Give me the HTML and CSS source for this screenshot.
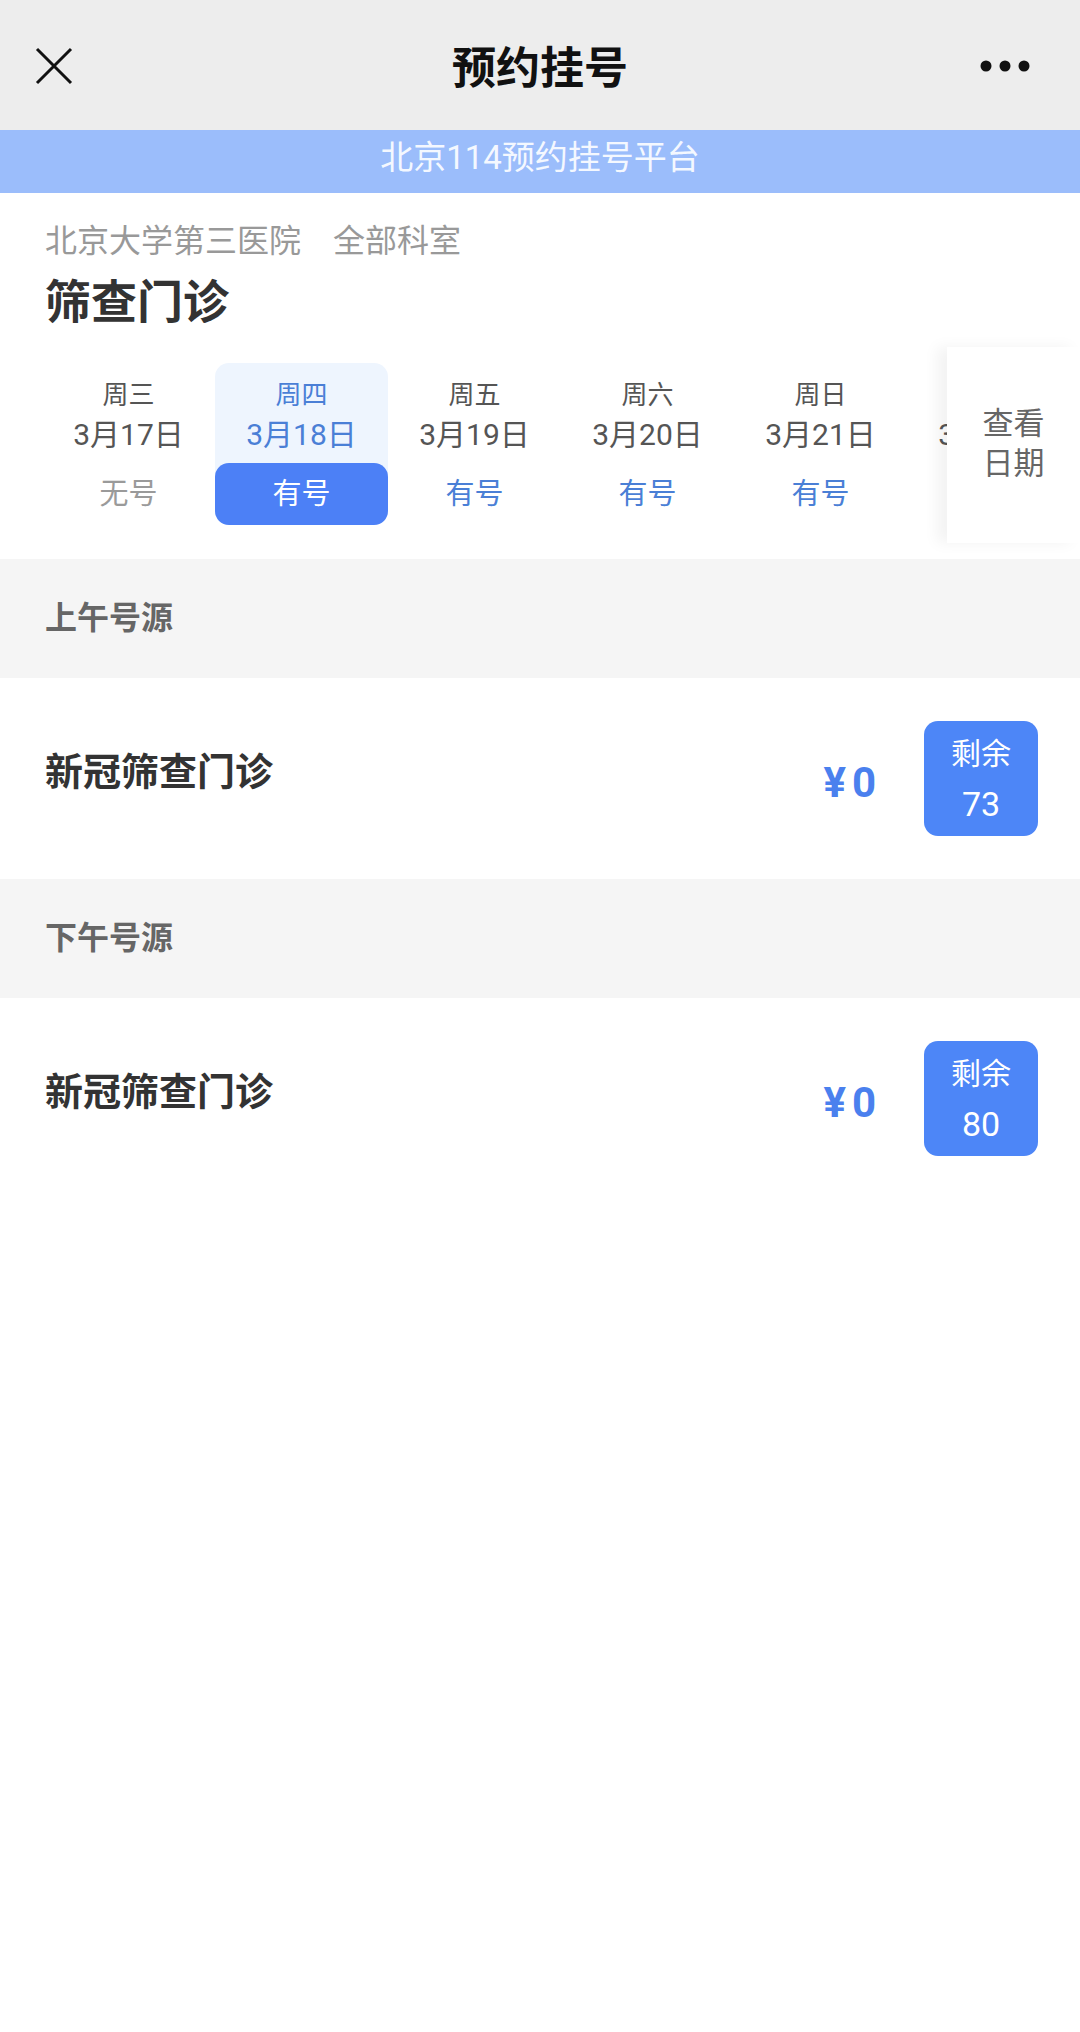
FILE: index.html
```html
<!DOCTYPE html>
<html lang="zh-CN">
<head>
  <meta charset="UTF-8" />
  <meta name="viewport" content="width=device-width, initial-scale=1.0" />
  <title>预约挂号</title>
  <link rel="stylesheet" href="styles.css">
</head>
<body>
  <header class="topbar">
    <div class="topbar-side">
      <svg class="icon-close" width="38" height="38" viewBox="0 0 38 38">
        <path d="M2 2 L36 36 M36 2 L2 36" stroke="#111" stroke-width="3" fill="none" />
      </svg>
    </div>
    <h1 class="topbar-title">预约挂号</h1>
    <div class="topbar-side right">
      <svg width="50" height="12" viewBox="0 0 50 12">
        <circle cx="6" cy="6" r="5.5" fill="#111" />
        <circle cx="25" cy="6" r="5.5" fill="#111" />
        <circle cx="44" cy="6" r="5.5" fill="#111" />
      </svg>
    </div>
  </header>

  <div class="platform-bar">北京114预约挂号平台</div>

  <section class="dept-info">
    <p class="dept-path">北京大学第三医院　全部科室</p>
    <h2 class="dept-name">筛查门诊</h2>
  </section>

  <div class="date-strip">
    <div class="date-list">
      <div class="date-cell">
        <span class="week">周三</span>
        <span class="day">3月17日</span>
        <span class="status none">无号</span>
      </div>
      <div class="date-cell active">
        <span class="week">周四</span>
        <span class="day">3月18日</span>
        <span class="status">有号</span>
      </div>
      <div class="date-cell">
        <span class="week">周五</span>
        <span class="day">3月19日</span>
        <span class="status">有号</span>
      </div>
      <div class="date-cell">
        <span class="week">周六</span>
        <span class="day">3月20日</span>
        <span class="status">有号</span>
      </div>
      <div class="date-cell">
        <span class="week">周日</span>
        <span class="day">3月21日</span>
        <span class="status">有号</span>
      </div>
      <div class="date-cell">
        <span class="week">周一</span>
        <span class="day">3月22日</span>
        <span class="status">有号</span>
      </div>
    </div>
    <div class="date-more">查看<br>日期</div>
  </div>

  <div class="section-title">上午号源</div>
  <div class="slot-row">
    <span class="slot-name">新冠筛查门诊</span>
    <span class="slot-price">¥0</span>
    <div class="slot-left">
      <span>剩余</span>
      <span class="num">73</span>
    </div>
  </div>

  <div class="section-title">下午号源</div>
  <div class="slot-row">
    <span class="slot-name">新冠筛查门诊</span>
    <span class="slot-price">¥0</span>
    <div class="slot-left">
      <span>剩余</span>
      <span class="num">80</span>
    </div>
  </div>
</body>
</html>
```

FILE: styles.css
```css
* {
  box-sizing: border-box;
  margin: 0;
  padding: 0;
}

body {
  font-family: 'Roboto', 'Noto Sans CJK SC', sans-serif;
  background: #ffffff;
  color: #333333;
  width: 1080px;
  min-height: 2032px;
}

.topbar {
  height: 130px;
  background: #ededed;
  display: flex;
  align-items: center;
}

.topbar-side {
  width: 110px;
  display: flex;
  align-items: center;
  padding-left: 35px;
  padding-top: 2px;
}

.topbar-side.right {
  justify-content: flex-end;
  padding-left: 0;
  padding-right: 50px;
}

.topbar-title {
  flex: 1;
  text-align: center;
  font-size: 44px;
  font-weight: 700;
  color: #111111;
  line-height: 1;
  padding-top: 8px;
}

.platform-bar {
  height: 63px;
  background: #9bbdfb;
  color: #f4f8ff;
  font-size: 33px;
  line-height: 56px;
  text-align: center;
}

.dept-info {
  padding: 26px 45px 0;
}

.dept-path {
  font-size: 32px;
  line-height: 44px;
  color: #999999;
}

.dept-name {
  margin-top: 11px;
  font-size: 46px;
  line-height: 56px;
  font-weight: 700;
  color: #333333;
}

.date-strip {
  position: relative;
  margin-top: 17px;
  height: 212px;
  padding: 16px 0 0 42px;
}

.date-list {
  display: flex;
  width: 905px;
  overflow: hidden;
}

.date-cell {
  flex: 0 0 173px;
  height: 162px;
  display: flex;
  flex-direction: column;
  align-items: center;
  padding-top: 14px;
  border-radius: 14px;
  color: #555555;
}

.date-cell .week {
  font-size: 26px;
  line-height: 36px;
}

.date-cell .day {
  font-size: 30px;
  line-height: 44px;
}

.date-cell .status {
  margin-top: 6px;
  width: 100%;
  height: 62px;
  line-height: 62px;
  text-align: center;
  font-size: 29px;
  color: #4a7fd6;
  border-radius: 14px;
}

.date-cell .status.none {
  color: #9a9a9a;
}

.date-cell.active {
  background: #eef5fe;
  color: #4a7fd6;
}

.date-cell.active .status {
  background: #4c80f6;
  color: #ffffff;
}

.date-more {
  position: absolute;
  top: 0;
  right: 0;
  bottom: 16px;
  width: 133px;
  background: #ffffff;
  box-shadow: -10px 0 14px rgba(0, 0, 0, 0.05);
  display: flex;
  align-items: center;
  justify-content: center;
  padding-bottom: 2px;
  font-size: 31px;
  line-height: 40px;
  color: #666666;
  text-align: center;
}

.section-title {
  height: 119px;
  background: #f5f5f5;
  padding-left: 45px;
  font-size: 32px;
  font-weight: 700;
  line-height: 119px;
  color: #666666;
}

.slot-row {
  height: 201px;
  display: flex;
  align-items: center;
  padding: 0 42px 0 45px;
}

.slot-name {
  flex: 1;
  font-size: 38px;
  font-weight: 700;
  color: #333333;
  margin-bottom: 20px;
}

.slot-price {
  font-size: 42px;
  font-weight: 700;
  color: #4a80ee;
  letter-spacing: 6px;
  margin-right: 42px;
  margin-top: 8px;
}

.slot-left {
  width: 114px;
  height: 115px;
  background: #4d86f7;
  border-radius: 14px;
  color: #ffffff;
  display: flex;
  flex-direction: column;
  align-items: center;
  justify-content: center;
  font-size: 30px;
  line-height: 50px;
}

.slot-left .num {
  font-size: 34px;
}
```
